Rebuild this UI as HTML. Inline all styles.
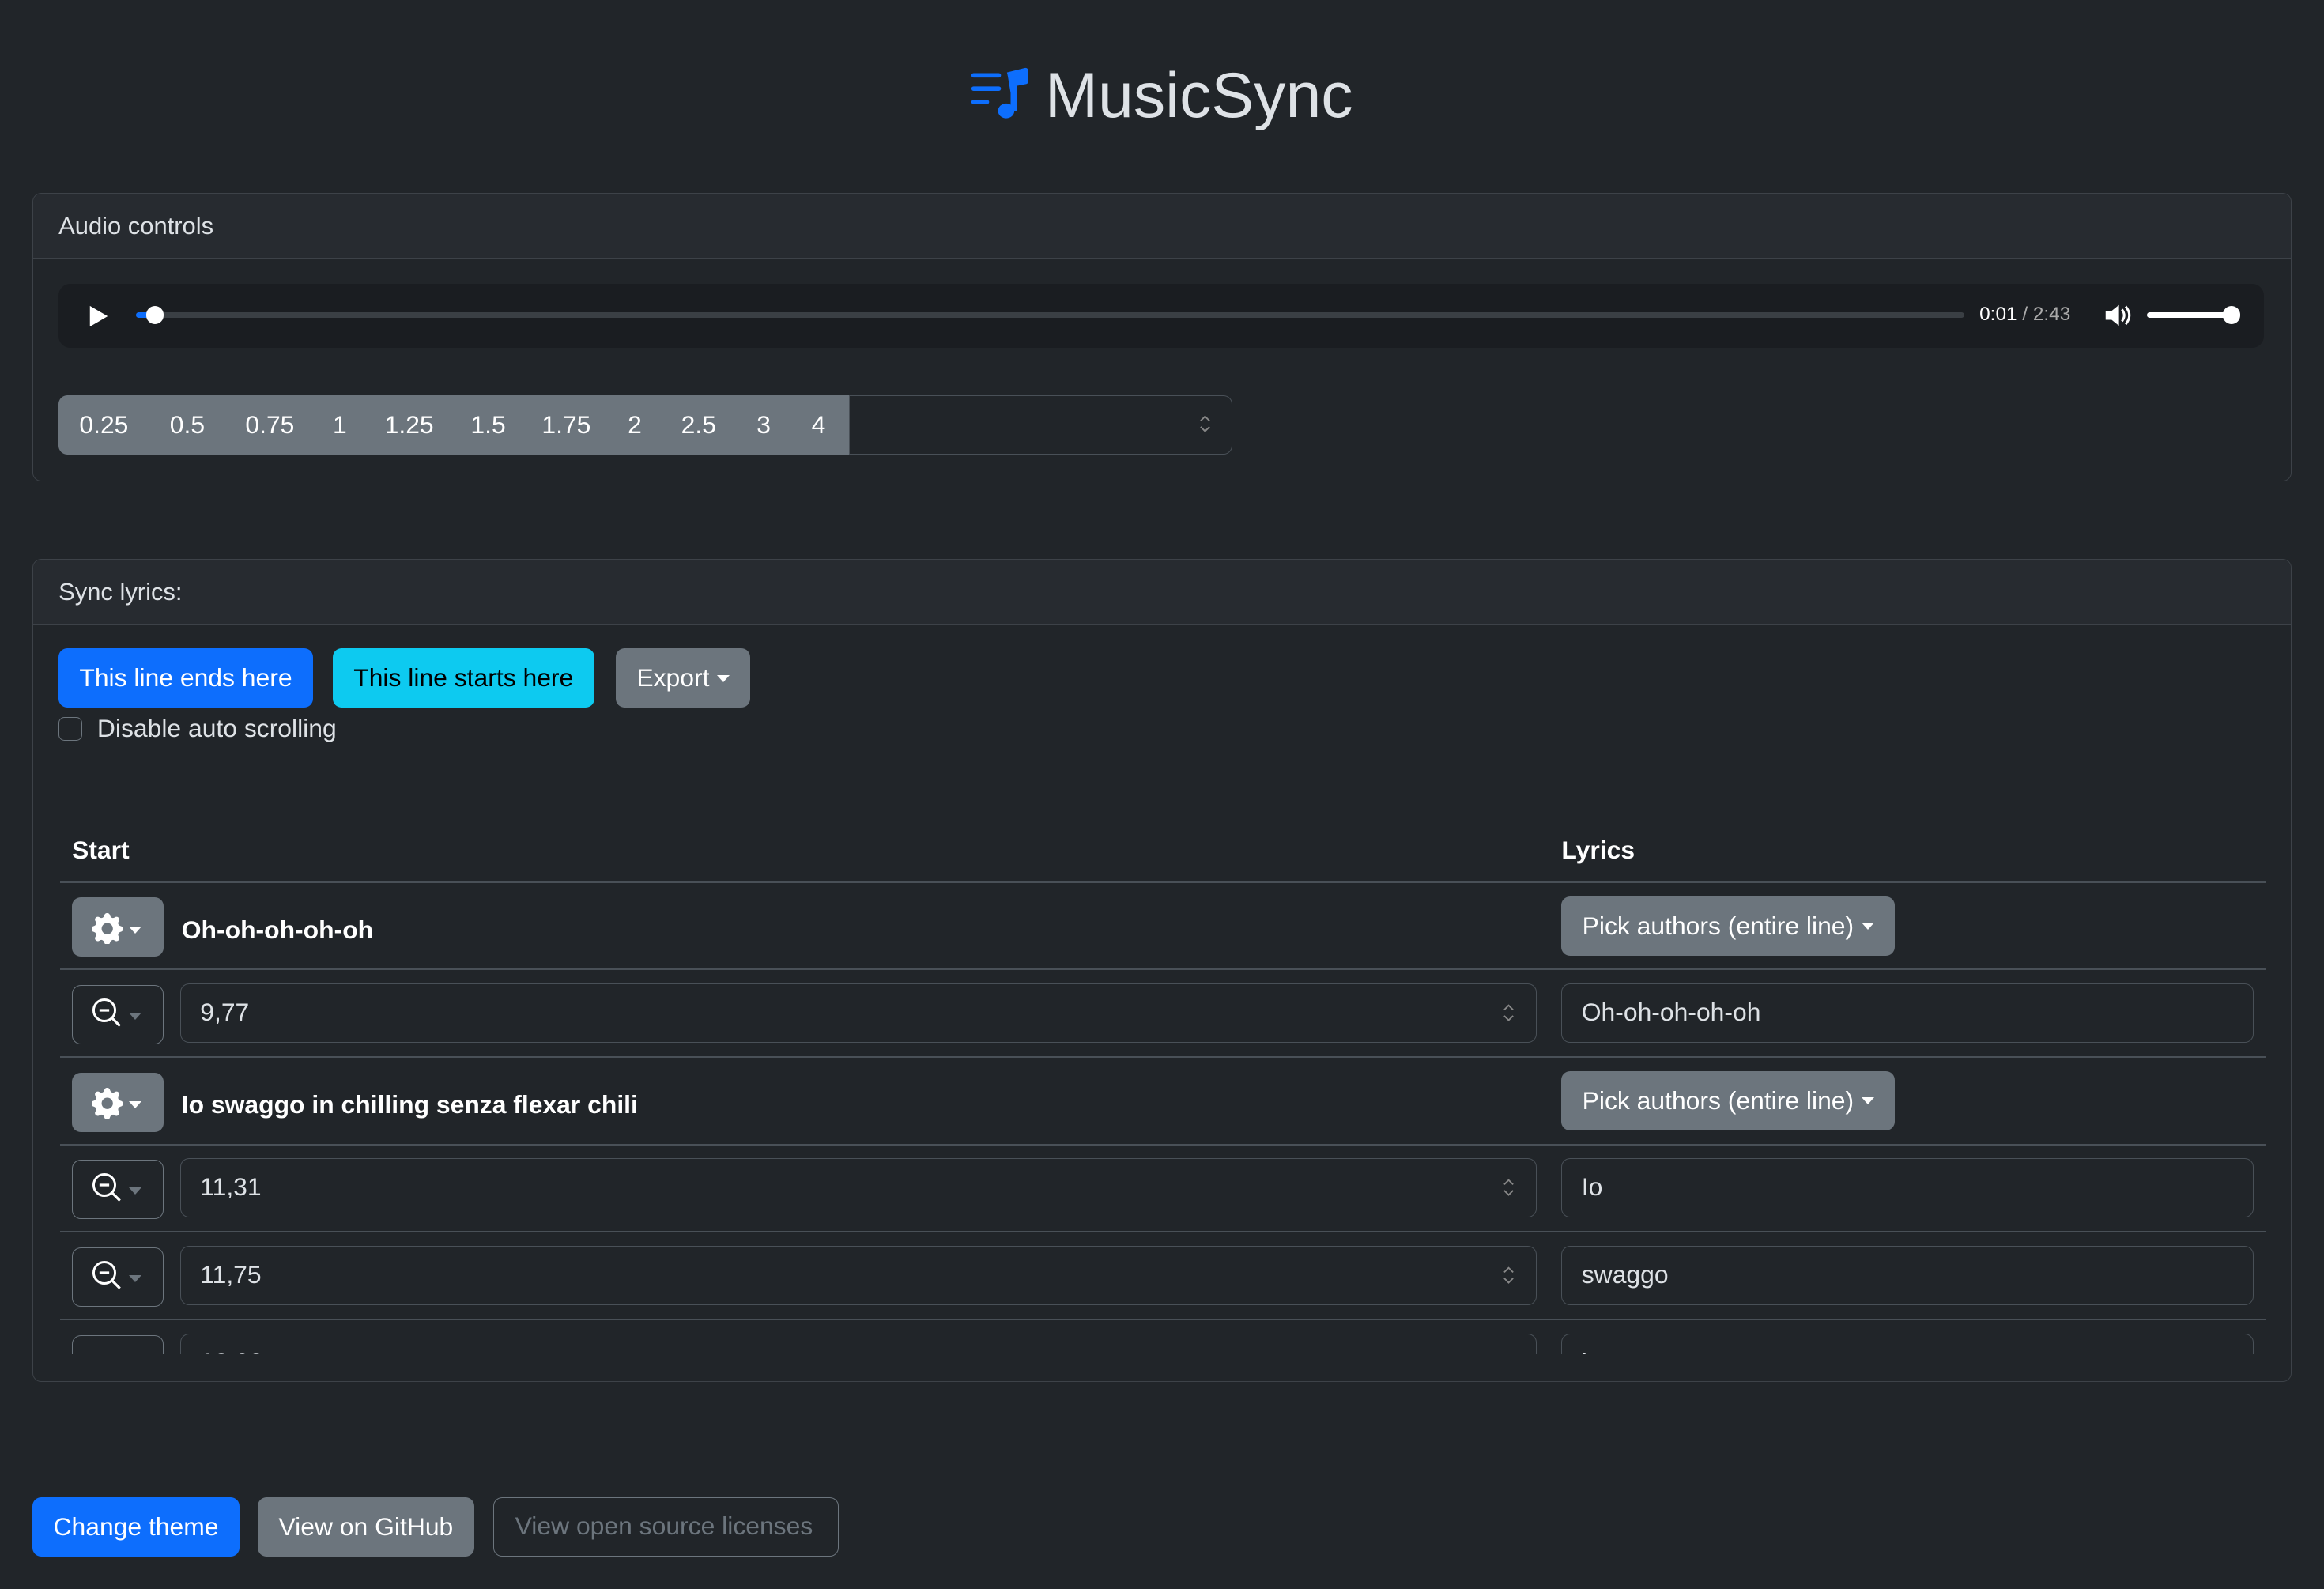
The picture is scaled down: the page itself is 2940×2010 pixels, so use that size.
<!DOCTYPE html>
<html><head><meta charset="utf-8"><style>
*{box-sizing:border-box}
html,body{margin:0;background:#212529}
body{zoom:1.875;width:1568px;height:1072px;position:relative;overflow:hidden;font-family:"Liberation Sans",sans-serif;color:#dee2e6;font-size:16px}
.a{position:absolute}
.card{position:absolute;left:22px;width:1524px;border:1px solid #3d4248;border-radius:6px}
.hd{height:44px;background:#272b30;border-bottom:1px solid #3d4248;padding:0 17px;line-height:44px;font-size:16.5px;border-radius:6px 6px 0 0}
.btn{position:absolute;height:40px;border-radius:6px;line-height:40px;font-size:17px;padding:0 14px;color:#fff;white-space:nowrap}
.caret{display:inline-block;width:0;height:0;border-left:4.5px solid transparent;border-right:4.5px solid transparent;border-top:5px solid currentColor;vertical-align:3px;margin-left:5px}
.inp{position:absolute;height:40px;border:1px solid #495057;border-radius:6px;line-height:38px;padding-left:13px;font-size:17px;color:#dee2e6;background:#212529}
.line{position:absolute;left:18px;width:1488px;height:1px;background:#495057}
.spin{position:absolute;right:14px;top:12px;width:8px;height:14px}
.gear{position:absolute;left:26px;width:62px;height:40px;border-radius:6px;background:#6c757d}
.zb{position:absolute;left:26px;width:62px;height:40px;border-radius:6px;border:1px solid #6c757d}
.bold{position:absolute;font-weight:bold;font-size:17px;color:#fff}
</style></head><body>
<svg class="a" style="left:654px;top:45px" width="42" height="38" viewBox="0 0 42 38"><g stroke="#0d6efd" stroke-width="3" stroke-linecap="round"><line x1="3" y1="6" x2="20" y2="6"/><line x1="3" y1="15" x2="20" y2="15"/><line x1="3" y1="24" x2="12" y2="24"/></g><path d="M26 6 L38 3 L38 10 L30 11.5 L30 30" stroke="#0d6efd" stroke-width="4" fill="#0d6efd" stroke-linejoin="round"/><ellipse cx="25" cy="30" rx="5.5" ry="5" fill="#0d6efd"/></svg>
<div class="a" style="left:705px;top:40px;font-size:43px;color:#dee2e6">MusicSync</div>

<div class="card" style="top:130px;height:195px">
<div class="hd">Audio controls</div>
<div class="a" style="left:17px;top:61px;width:1488px;height:43px;background:#1a1d21;border-radius:8px">
<svg class="a" style="left:19px;top:14px" width="16" height="16"><path d="M2 1 L14 8 L2 15Z" fill="#fff"/></svg>
<div class="a" style="left:52px;top:19px;width:1234px;height:4px;background:#3a3f44;border-radius:2px"></div>
<div class="a" style="left:52px;top:19px;width:12px;height:4px;background:#0d6efd;border-radius:2px"></div>
<div class="a" style="left:59px;top:15px;width:12px;height:12px;background:#fff;border-radius:50%"></div>
<div class="a" style="left:1296px;top:13px;font-size:13px;color:#fff">0:01 <span style="color:#aaa">/ 2:43</span></div>
<svg class="a" style="left:1379px;top:12px" width="20" height="18"><path d="M2 6h4l5-4v14l-5-4H2z" fill="#fff"/><path d="M13 5q3 4 0 8M15.5 3q5 6 0 12" stroke="#fff" stroke-width="1.6" fill="none"/></svg>
<div class="a" style="left:1409px;top:19px;width:56px;height:4px;background:#fff;border-radius:2px"></div>
<div class="a" style="left:1460px;top:15px;width:12px;height:12px;background:#fff;border-radius:50%"></div>
</div>
<div class="a" style="left:17px;top:136px;width:533px;height:40px;background:#6c757d;border-radius:6px 0 0 6px;color:#fff;font-size:17px;line-height:40px">
<span class="a" style="left:14px">0.25</span><span class="a" style="left:75px">0.5</span><span class="a" style="left:126px">0.75</span><span class="a" style="left:185px">1</span><span class="a" style="left:220px">1.25</span><span class="a" style="left:278px">1.5</span><span class="a" style="left:326px">1.75</span><span class="a" style="left:384px">2</span><span class="a" style="left:420px">2.5</span><span class="a" style="left:471px">3</span><span class="a" style="left:508px">4</span></div>
<div class="inp" style="left:550px;top:136px;width:259px;border-radius:0 6px 6px 0"><svg class="spin"><path d="M1 5l3-3 3 3M1 9l3 3 3-3" stroke="#888" fill="none"/></svg></div>
</div>

<div class="card" style="top:377px;height:555px;overflow:hidden">
<div class="hd">Sync lyrics:</div>
<div class="btn" style="left:17px;top:60px;background:#0d6efd">This line ends here</div>
<div class="btn" style="left:202px;top:60px;background:#0dcaf0;color:#000">This line starts here</div>
<div class="btn" style="left:393px;top:60px;background:#6c757d">Export<span class="caret"></span></div>
<div class="a" style="left:17px;top:106px;width:16px;height:16px;border:1px solid #6c757d;border-radius:4px"></div>
<div class="a" style="left:43px;top:104px;font-size:17px">Disable auto scrolling</div>
<div class="a" style="left:0;top:0;width:1524px;height:536px;overflow:hidden">
<div class="bold" style="left:26px;top:186px">Start</div>
<div class="bold" style="left:1031px;top:186px">Lyrics</div>
<div class="line" style="top:217px"></div>
<div class="gear" style="top:228px"></div>
<div class="bold" style="left:100px;top:240px">Oh-oh-oh-oh-oh</div>
<div class="btn" style="left:1031px;top:227px;background:#6c757d">Pick authors (entire line)<span class="caret"></span></div>
<div class="line" style="top:276px"></div>
<div class="zb" style="top:287px"></div>
<div class="inp" style="left:99px;top:286px;width:915px">9,77<svg class="spin"><path d="M1 5l3-3 3 3M1 9l3 3 3-3" stroke="#888" fill="none"/></svg></div>
<div class="inp" style="left:1031px;top:286px;width:467px">Oh-oh-oh-oh-oh</div>
<div class="line" style="top:335px"></div>
<div class="gear" style="top:346px"></div>
<div class="bold" style="left:100px;top:358px">Io swaggo in chilling senza flexar chili</div>
<div class="btn" style="left:1031px;top:345px;background:#6c757d">Pick authors (entire line)<span class="caret"></span></div>
<div class="line" style="top:394px"></div>
<div class="zb" style="top:405px"></div>
<div class="inp" style="left:99px;top:404px;width:915px">11,31<svg class="spin"><path d="M1 5l3-3 3 3M1 9l3 3 3-3" stroke="#888" fill="none"/></svg></div>
<div class="inp" style="left:1031px;top:404px;width:467px">Io</div>
<div class="line" style="top:453px"></div>
<div class="zb" style="top:464px"></div>
<div class="inp" style="left:99px;top:463px;width:915px">11,75<svg class="spin"><path d="M1 5l3-3 3 3M1 9l3 3 3-3" stroke="#888" fill="none"/></svg></div>
<div class="inp" style="left:1031px;top:463px;width:467px">swaggo</div>
<div class="line" style="top:512px"></div>
<div class="zb" style="top:523px"></div>
<div class="inp" style="left:99px;top:522px;width:915px">12,03</div>
<div class="inp" style="left:1031px;top:522px;width:467px">in</div>
</div>
</div>
<svg width="0" height="0" style="position:absolute"><defs>
<symbol id="g" viewBox="0 0 16 16"><path fill="#fff" d="M9.4 1.1c-.4-1.5-2.5-1.5-2.9 0l-.1.3a1.5 1.5 0 0 1-2.2.9l-.3-.2c-1.3-.8-2.8.7-2 2l.2.3a1.5 1.5 0 0 1-.9 2.2l-.3.1c-1.5.4-1.5 2.5 0 2.9l.3.1a1.5 1.5 0 0 1 .9 2.2l-.2.3c-.8 1.3.7 2.8 2 2l.3-.2a1.5 1.5 0 0 1 2.2.9l.1.3c.4 1.5 2.5 1.5 2.9 0l.1-.3a1.5 1.5 0 0 1 2.2-.9l.3.2c1.3.8 2.8-.7 2-2l-.2-.3a1.5 1.5 0 0 1 .9-2.2l.3-.1c1.5-.4 1.5-2.5 0-2.9l-.3-.1a1.5 1.5 0 0 1-.9-2.2l.2-.3c.8-1.3-.7-2.8-2-2l-.3.2a1.5 1.5 0 0 1-2.2-.9zM8 10.9a2.9 2.9 0 1 1 0-5.8 2.9 2.9 0 0 1 0 5.8"/></symbol>
<symbol id="z" viewBox="0 0 16 16"><circle cx="6.5" cy="6.5" r="5.5" stroke="#fff" stroke-width="1.2" fill="none"/><path d="M4 6.5h5M10.5 10.5l4 4" stroke="#fff" stroke-width="1.3"/></symbol></defs></svg>
<svg class="a" style="left:62px;top:616px" width="21" height="21"><use href="#g"/></svg><span class="a caret" style="left:82px;top:625px;color:#fff"></span>
<svg class="a" style="left:62px;top:734px" width="21" height="21"><use href="#g"/></svg><span class="a caret" style="left:82px;top:743px;color:#fff"></span>
<svg class="a" style="left:62px;top:673px" width="21" height="21"><use href="#z"/></svg><span class="a caret" style="left:82px;top:683px;color:#6c757d"></span>
<svg class="a" style="left:62px;top:791px" width="21" height="21"><use href="#z"/></svg><span class="a caret" style="left:82px;top:801px;color:#6c757d"></span>
<svg class="a" style="left:62px;top:850px" width="21" height="21"><use href="#z"/></svg><span class="a caret" style="left:82px;top:860px;color:#6c757d"></span>

<div class="btn" style="left:22px;top:1010px;background:#0d6efd">Change theme</div>
<div class="btn" style="left:174px;top:1010px;background:#6c757d">View on GitHub</div>
<div class="btn" style="left:333px;top:1010px;width:233px;border:1px solid #6c757d;color:#6c757d;line-height:38px">View open source licenses</div>
</body></html>
